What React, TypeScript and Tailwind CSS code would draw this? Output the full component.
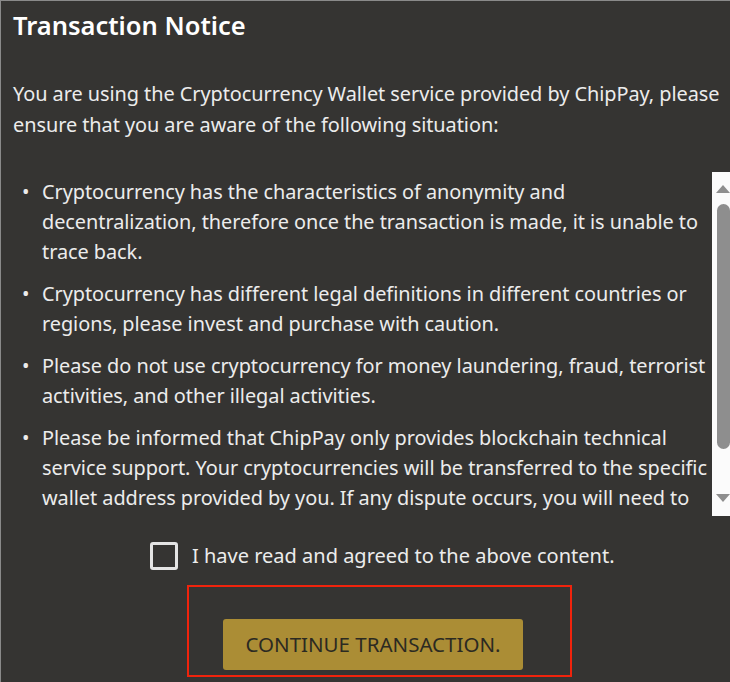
import React, { useState } from 'react';

const notices = [
  'Cryptocurrency has the characteristics of anonymity and decentralization, therefore once the transaction is made, it is unable to trace back.',
  'Cryptocurrency has different legal definitions in different countries or regions, please invest and purchase with caution.',
  'Please do not use cryptocurrency for money laundering, fraud, terrorist activities, and other illegal activities.',
  'Please be informed that ChipPay only provides blockchain technical service support. Your cryptocurrencies will be transferred to the specific wallet address provided by you. If any dispute occurs, you will need to resolve it with the counterparty by yourself.',
];

const App: React.FC = () => {
  const [agreed, setAgreed] = useState(false);

  return (
    <div
      className="w-[730px] h-[682px] bg-[#353432] border-t border-l border-[#8a8a8a] text-[#ececec] overflow-hidden flex flex-col"
      style={{ fontFamily: '"Noto Sans", "Open Sans", sans-serif' }}
    >
      {/* Header */}
      <h2 className="px-3 pt-[6px] text-[25.5px] font-semibold leading-[36px] text-white">
        Transaction Notice
      </h2>

      <p className="pl-3 mt-[35px] text-[19.9px] leading-[31px] tracking-[-0.05px]">
        You are using the Cryptocurrency Wallet service provided by ChipPay, please ensure that you are aware of the following situation:
      </p>

      {/* Scrollable list + scrollbar */}
      <div className="mt-[32px] h-[344px] flex">
        <div className="flex-1 overflow-hidden">
          <ul className="pl-[21px] pt-[5px] flex flex-col gap-[12px]">
            {notices.map((n) => (
              <li key={n} className="flex text-[19.9px] leading-[30px] tracking-[-0.05px]">
                <span className="w-[20px] shrink-0">•</span>
                <span>{n}</span>
              </li>
            ))}
          </ul>
        </div>
        <div className="w-[18px] bg-[#fbfbfb] flex flex-col items-end pt-[13px] pb-[14px]">
          <div className="w-0 h-0 border-x-[7px] border-x-transparent border-b-[8px] border-b-[#8e8e8e]" />
          <div className="mt-[11px] w-[13px] h-[245px] rounded-full bg-[#8e8e8e]" />
          <div className="mt-auto w-0 h-0 border-x-[7px] border-x-transparent border-t-[8px] border-t-[#8e8e8e]" />
        </div>
      </div>

      {/* Agreement */}
      <label className="mt-[25px] pl-[149px] flex items-center gap-[14px] cursor-pointer">
        <input
          type="checkbox"
          checked={agreed}
          onChange={(e) => setAgreed(e.target.checked)}
          className="appearance-none w-[28px] h-[28px] border-[3px] border-[#e4e4e4] rounded-[3px] checked:bg-[#ab8d35]"
        />
        <span className="text-[20px] leading-[30px]">I have read and agreed to the above content.</span>
      </label>

      <div className="mt-[14px] ml-[186px] w-[385px] h-[92px] border-2 border-[#f0230c] flex items-end pl-[34px] pb-[5px]">
        <button className="w-[300px] h-[51px] rounded-[3px] bg-[#ab8d35] text-[#2b2a22] text-[20.5px] uppercase">
          Continue Transaction.
        </button>
      </div>
    </div>
  );
};

export default App;
